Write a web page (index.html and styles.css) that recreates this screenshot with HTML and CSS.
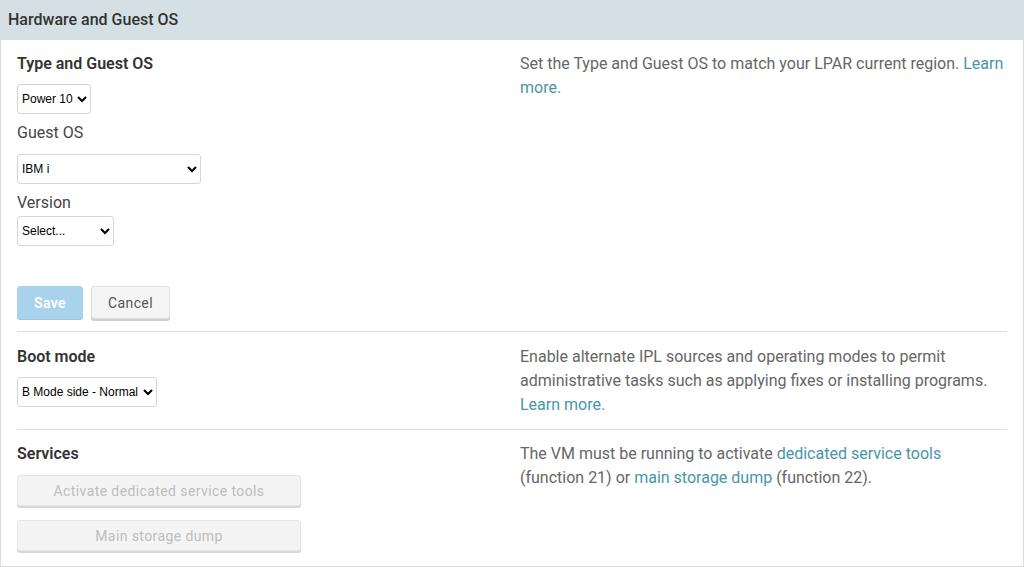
FILE: index.html
```html
<!DOCTYPE html>
<html lang="en">
<head>
<meta charset="utf-8">
<title>Hardware and Guest OS</title>
<link rel="stylesheet" href="styles.css">
</head>
<body>
<div class="panel">
  <div class="panel-header">Hardware and Guest OS</div>
  <div class="panel-body">
    <div class="section section-type">
      <div class="col-left">
        <div class="heading">Type and Guest OS</div>
        <select class="sel sel-first"><option>Power 10</option></select>
        <div class="label label-guest">Guest OS</div>
        <select class="sel sel-wide"><option>IBM i</option></select>
        <div class="label label-version">Version</div>
        <select class="sel sel-version"><option>Select...</option></select>
        <div class="actions">
          <button class="btn btn-primary">Save</button>
          <button class="btn btn-default">Cancel</button>
        </div>
      </div>
      <div class="desc">Set the Type and Guest OS to match your LPAR current region. <a href="#">Learn more.</a></div>
    </div>
    <div class="section section-boot">
      <div class="col-left">
        <div class="heading">Boot mode</div>
        <select class="sel sel-first"><option>B Mode side - Normal</option></select>
      </div>
      <div class="desc">Enable alternate IPL sources and operating modes to permit administrative tasks such as applying fixes or installing programs. <a href="#">Learn more.</a></div>
    </div>
    <div class="section section-services">
      <div class="col-left">
        <div class="heading">Services</div>
        <button class="btn btn-disabled btn-first" disabled>Activate dedicated service tools</button>
        <button class="btn btn-disabled btn-second" disabled>Main storage dump</button>
      </div>
      <div class="desc">The VM must be running to activate <a href="#">dedicated service tools</a> (function 21) or <a href="#">main storage dump</a> (function 22).</div>
    </div>
  </div>
</div>
</body>
</html>
```

FILE: styles.css
```css
* { box-sizing: border-box; }
html, body { margin: 0; padding: 0; background: #fff; }
body {
  font-family: Roboto, "Liberation Sans", Arial, sans-serif;
  font-size: 16px;
  color: #444;
}
.panel {
  width: 1024px;
  height: 567px;
  border: 1px solid #dadada;
  border-top: none;
}
.panel-header {
  height: 40px;
  margin: 0 -1px;
  padding: 0 8px;
  background: #d4e0e4;
  color: #333;
  font-weight: 500;
  line-height: 40px;
  font-size: 16px;
}
.panel-body {
  padding: 0 16px;
}
.section {
  display: grid;
  grid-template-columns: 486px 1fr;
  column-gap: 17px;
  border-bottom: 1px solid #dcdcdc;
  padding: 12px 0 12px;
}
.section-boot { padding-top: 13px; padding-bottom: 12px; }
.section-services { border-bottom: none; padding-top: 12px; padding-bottom: 0; }
.col-left { display: flex; flex-direction: column; align-items: flex-start; }
.heading {
  font-weight: 600;
  color: #333;
  line-height: 24px;
}
.label { line-height: 24px; color: #444; }
.label-guest { margin-top: 7px; }
.label-version { margin-top: 7px; }
.sel {
  height: 30px;
  font-family: "Liberation Sans", Arial, sans-serif;
  font-size: 12px;
  color: #000;
  background: #fff;
  border: 1px solid #d6d6d6;
  border-radius: 3px;
  padding: 0 1px 0 0;
}
.sel-first { margin-top: 8px; }
.sel-wide { margin-top: 9px; width: 184px; }
.sel-version { margin-top: 1px; width: 97px; }
.actions { display: flex; gap: 8px; margin-top: 40px; }
.btn {
  font-family: Roboto, "Liberation Sans", Arial, sans-serif;
  font-size: 14px;
  letter-spacing: 0.4px;
  border-radius: 3px;
  height: 33px;
  cursor: pointer;
}
.btn-primary {
  width: 66px;
  background: #a9d2ec;
  color: #fff;
  font-weight: 600;
  border: 1px solid #a9d2ec;
  box-shadow: 0 1px 0 #9cc6e0;
}
.btn-default {
  width: 79px;
  background: #f5f5f5;
  color: #555;
  border: 1px solid #dedede;
  box-shadow: 0 2px 0 #cfcfcf;
}
.btn-disabled {
  width: 284px;
  height: 31px;
  background: #f4f4f4;
  color: #bdbdbd;
  border: 1px solid #e6e6e6;
  box-shadow: 0 2px 0 #d8d8d8;
  cursor: default;
}
.btn-first { margin-top: 9px; }
.btn-second { margin-top: 14px; }
.desc {
  color: #666;
  line-height: 24px;
  font-size: 16px;
}
.desc a { color: #4896a8; text-decoration: none; }
```
